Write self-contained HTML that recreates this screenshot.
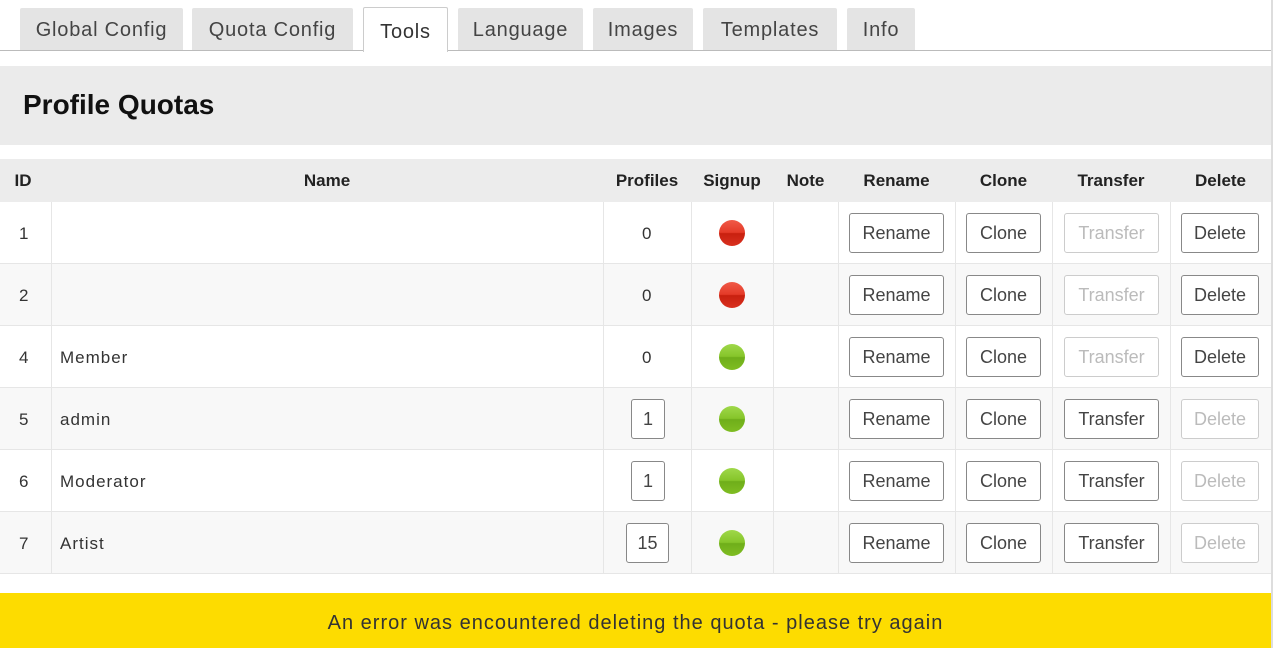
<!DOCTYPE html>
<html><head><meta charset="utf-8"><style>
*{box-sizing:border-box;margin:0;padding:0}
body{width:1280px;height:648px;background:#fff;font-family:"Liberation Sans",sans-serif;position:relative;overflow:hidden;color:#222}
.a{position:absolute}
.tab{position:absolute;top:8px;height:42px;background:#e4e4e4;font-size:20px;letter-spacing:0.8px;color:#444;text-align:center;line-height:44px;border-radius:2px 2px 0 0}
.tab.on{background:#fff;border:1px solid #ccc;border-bottom:none;top:7px;height:45px;line-height:48px;color:#333}
.th{position:absolute;top:159px;height:43px;line-height:43px;font-weight:bold;font-size:17px;text-align:center;color:#222}
.row{position:absolute;left:0;width:1271px;height:62px;border-bottom:1px solid #e6e6e6}
.cell{position:absolute;top:0;height:62px;line-height:64px;font-size:17px;letter-spacing:1px;color:#333}
.vl{position:absolute;top:202px;height:372px;width:1px;background:#e6e6e6}
.btn{position:absolute;height:40px;border:1px solid #888;border-radius:3px;background:#fff;font-size:18px;line-height:38px;text-align:center;color:#444;font-family:"Liberation Sans",sans-serif}
.dis{color:#bbb;border-color:#ccc}
.dot{position:absolute;width:26px;height:26px;border-radius:50%}
.red{background:linear-gradient(#f05a48 0,#e43a28 48%,#c8200f 52%,#d9301f 100%)}
.grn{background:linear-gradient(#9fd84a 0,#86c52a 48%,#6fae1a 52%,#7fbd22 100%)}
</style></head><body>
<div class="a" style="left:0;top:50px;width:1271px;height:1px;background:#bbb"></div>
<div class="tab" style="left:20px;width:163px">Global Config</div>
<div class="tab" style="left:192px;width:161px">Quota Config</div>
<div class="tab on" style="left:363px;width:85px">Tools</div>
<div class="tab" style="left:458px;width:125px">Language</div>
<div class="tab" style="left:593px;width:100px">Images</div>
<div class="tab" style="left:703px;width:134px">Templates</div>
<div class="tab" style="left:847px;width:68px">Info</div>
<div class="a" style="left:1271px;top:0;width:2px;height:648px;background:#ddd"></div>

<div class="a" style="left:0;top:66px;width:1271px;height:79px;background:#ebebeb"></div>
<div class="a" style="left:23px;top:89px;font-size:28px;font-weight:bold;color:#111">Profile Quotas</div>

<div class="a" style="left:0;top:159px;width:1271px;height:43px;background:#ececec"></div>
<div class="th" style="left:0;width:46px;">ID</div>
<div class="th" style="left:51px;width:552px">Name</div>
<div class="th" style="left:603px;width:88px">Profiles</div>
<div class="th" style="left:691px;width:82px">Signup</div>
<div class="th" style="left:773px;width:65px">Note</div>
<div class="th" style="left:838px;width:117px">Rename</div>
<div class="th" style="left:955px;width:97px">Clone</div>
<div class="th" style="left:1052px;width:118px">Transfer</div>
<div class="th" style="left:1170px;width:101px">Delete</div>

<div class="row" style="top:202px;background:#fff"></div>
<div class="row" style="top:264px;background:#f8f8f8"></div>
<div class="row" style="top:326px;background:#fff"></div>
<div class="row" style="top:388px;background:#f8f8f8"></div>
<div class="row" style="top:450px;background:#fff"></div>
<div class="row" style="top:512px;background:#f8f8f8"></div>
<div class="vl" style="left:51px"></div><div class="vl" style="left:603px"></div><div class="vl" style="left:691px"></div><div class="vl" style="left:773px"></div><div class="vl" style="left:838px"></div><div class="vl" style="left:955px"></div><div class="vl" style="left:1052px"></div><div class="vl" style="left:1170px"></div>

<div class="cell" style="top:202px;left:19px">1</div>
<div class="cell" style="top:202px;left:642px">0</div>
<div class="dot red" style="left:719px;top:220px"></div>
<div class="btn" style="left:849px;top:213px;width:95px">Rename</div>
<div class="btn" style="left:966px;top:213px;width:75px">Clone</div>
<div class="btn dis" style="left:1064px;top:213px;width:95px">Transfer</div>
<div class="btn" style="left:1181px;top:213px;width:78px">Delete</div>

<div class="cell" style="top:264px;left:19px">2</div>
<div class="cell" style="top:264px;left:642px">0</div>
<div class="dot red" style="left:719px;top:282px"></div>
<div class="btn" style="left:849px;top:275px;width:95px">Rename</div>
<div class="btn" style="left:966px;top:275px;width:75px">Clone</div>
<div class="btn dis" style="left:1064px;top:275px;width:95px">Transfer</div>
<div class="btn" style="left:1181px;top:275px;width:78px">Delete</div>

<div class="cell" style="top:326px;left:19px">4</div>
<div class="cell" style="top:326px;left:60px">Member</div>
<div class="cell" style="top:326px;left:642px">0</div>
<div class="dot grn" style="left:719px;top:344px"></div>
<div class="btn" style="left:849px;top:337px;width:95px">Rename</div>
<div class="btn" style="left:966px;top:337px;width:75px">Clone</div>
<div class="btn dis" style="left:1064px;top:337px;width:95px">Transfer</div>
<div class="btn" style="left:1181px;top:337px;width:78px">Delete</div>

<div class="cell" style="top:388px;left:19px">5</div>
<div class="cell" style="top:388px;left:60px">admin</div>
<div class="btn" style="left:631px;top:399px;width:34px">1</div>
<div class="dot grn" style="left:719px;top:406px"></div>
<div class="btn" style="left:849px;top:399px;width:95px">Rename</div>
<div class="btn" style="left:966px;top:399px;width:75px">Clone</div>
<div class="btn" style="left:1064px;top:399px;width:95px">Transfer</div>
<div class="btn dis" style="left:1181px;top:399px;width:78px">Delete</div>

<div class="cell" style="top:450px;left:19px">6</div>
<div class="cell" style="top:450px;left:60px">Moderator</div>
<div class="btn" style="left:631px;top:461px;width:34px">1</div>
<div class="dot grn" style="left:719px;top:468px"></div>
<div class="btn" style="left:849px;top:461px;width:95px">Rename</div>
<div class="btn" style="left:966px;top:461px;width:75px">Clone</div>
<div class="btn" style="left:1064px;top:461px;width:95px">Transfer</div>
<div class="btn dis" style="left:1181px;top:461px;width:78px">Delete</div>

<div class="cell" style="top:512px;left:19px">7</div>
<div class="cell" style="top:512px;left:60px">Artist</div>
<div class="btn" style="left:626px;top:523px;width:43px">15</div>
<div class="dot grn" style="left:719px;top:530px"></div>
<div class="btn" style="left:849px;top:523px;width:95px">Rename</div>
<div class="btn" style="left:966px;top:523px;width:75px">Clone</div>
<div class="btn" style="left:1064px;top:523px;width:95px">Transfer</div>
<div class="btn dis" style="left:1181px;top:523px;width:78px">Delete</div>

<div class="a" style="left:0;top:593px;width:1271px;height:55px;background:#fddc00;text-align:center;line-height:60px;font-size:20px;letter-spacing:1px;color:#333">An error was encountered deleting the quota - please try again</div>
</body></html>
